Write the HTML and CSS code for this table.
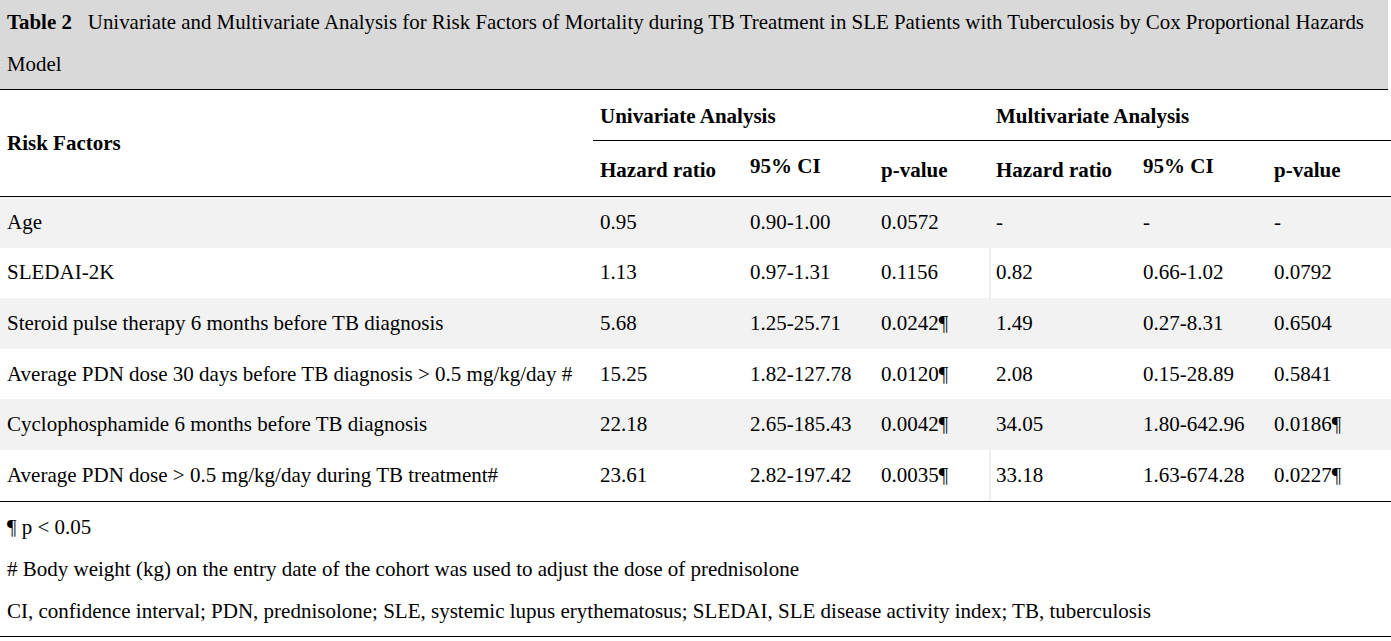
FILE: index.html
```html
<!DOCTYPE html>
<html>
<head>
<meta charset="utf-8">
<link rel="stylesheet" href="styles.css">
</head>
<body>
<div class="caption"><b class="label">Table 2</b>Univariate and Multivariate Analysis for Risk Factors of Mortality during TB Treatment in SLE Patients with Tuberculosis by Cox Proportional Hazards Model</div>
<table class="data">
<colgroup>
<col class="c1"><col class="c2"><col class="c3"><col class="c4"><col class="c5"><col class="c6"><col class="c7">
</colgroup>
<thead>
<tr class="h1">
<th rowspan="2" class="rf">Risk Factors</th>
<th colspan="3" class="grp">Univariate Analysis</th>
<th colspan="3" class="grp">Multivariate Analysis</th>
</tr>
<tr class="h2">
<th>Hazard ratio</th><th class="ci">95% CI</th><th>p-value</th>
<th>Hazard ratio</th><th class="ci">95% CI</th><th>p-value</th>
</tr>
</thead>
<tbody>
<tr class="alt"><td>Age</td><td>0.95</td><td>0.90-1.00</td><td>0.0572</td><td>-</td><td>-</td><td>-</td></tr>
<tr><td>SLEDAI-2K</td><td>1.13</td><td>0.97-1.31</td><td>0.1156</td><td class="sep">0.82</td><td>0.66-1.02</td><td>0.0792</td></tr>
<tr class="alt"><td>Steroid pulse therapy 6 months before TB diagnosis</td><td>5.68</td><td>1.25-25.71</td><td>0.0242¶</td><td>1.49</td><td>0.27-8.31</td><td>0.6504</td></tr>
<tr><td>Average PDN dose 30 days before TB diagnosis &gt; 0.5 mg/kg/day #</td><td>15.25</td><td>1.82-127.78</td><td>0.0120¶</td><td>2.08</td><td>0.15-28.89</td><td>0.5841</td></tr>
<tr class="alt"><td>Cyclophosphamide 6 months before TB diagnosis</td><td>22.18</td><td>2.65-185.43</td><td>0.0042¶</td><td>34.05</td><td>1.80-642.96</td><td>0.0186¶</td></tr>
<tr><td>Average PDN dose &gt; 0.5 mg/kg/day during TB treatment#</td><td>23.61</td><td>2.82-197.42</td><td>0.0035¶</td><td class="sep">33.18</td><td>1.63-674.28</td><td>0.0227¶</td></tr>
</tbody>
</table>
<div class="notes">
<p>¶ p &lt; 0.05</p>
<p># Body weight (kg) on the entry date of the cohort was used to adjust the dose of prednisolone</p>
<p>CI, confidence interval; PDN, prednisolone; SLE, systemic lupus erythematosus; SLEDAI, SLE disease activity index; TB, tuberculosis</p>
</div>
</body>
</html>
```
FILE: styles.css
```css
html, body {
  margin: 0;
  padding: 0;
  background: #fff;
}
body {
  width: 1391px;
  font-family: "Liberation Serif", "Times New Roman", serif;
  font-size: 21px;
  color: #000;
}
.caption {
  background: #d9d9d9;
  padding: 1px 0 5px 7px;
  line-height: 42px;
  box-sizing: border-box;
  width: 1388px;
  height: 90px;
  border-bottom: 1px solid #000;
  font-size: 20.9px;
}
.label {
  margin-right: 16px;
}
.data {
  border-collapse: collapse;
  table-layout: fixed;
  width: 1391px;
}
.c1 { width: 593px; }
.c2 { width: 150px; }
.c3 { width: 131px; }
.c4 { width: 115px; }
.c5 { width: 147px; }
.c6 { width: 131px; }
.c7 { width: 124px; }
.data th, .data td {
  padding: 0 0 0 7px;
  text-align: left;
  white-space: nowrap;
  vertical-align: middle;
}
.data th {
  font-weight: bold;
}
.h1 th { height: 50px; }
.h1 th.grp { border-bottom: 1px solid #000; padding-top: 3px; height: 47px; }
.h2 th { height: 51px; padding-top: 4px; }
.h2 th.ci { padding-top: 0; padding-bottom: 4px; }
.data thead tr.h2 th, .data th.rf { border-bottom: 1px solid #000; }
.data td { height: 50.6px; }
.data tr.alt td { background: #f2f2f2; }
.data td.sep { box-shadow: inset 2px 0 0 #efefef; }
.data tbody tr:last-child td { border-bottom: 1px solid #000; }
.notes {
  padding: 4px 0 4px 7px;
  border-bottom: 1px solid #000;
}
.notes p {
  margin: 0;
  line-height: 42px;
}
```
